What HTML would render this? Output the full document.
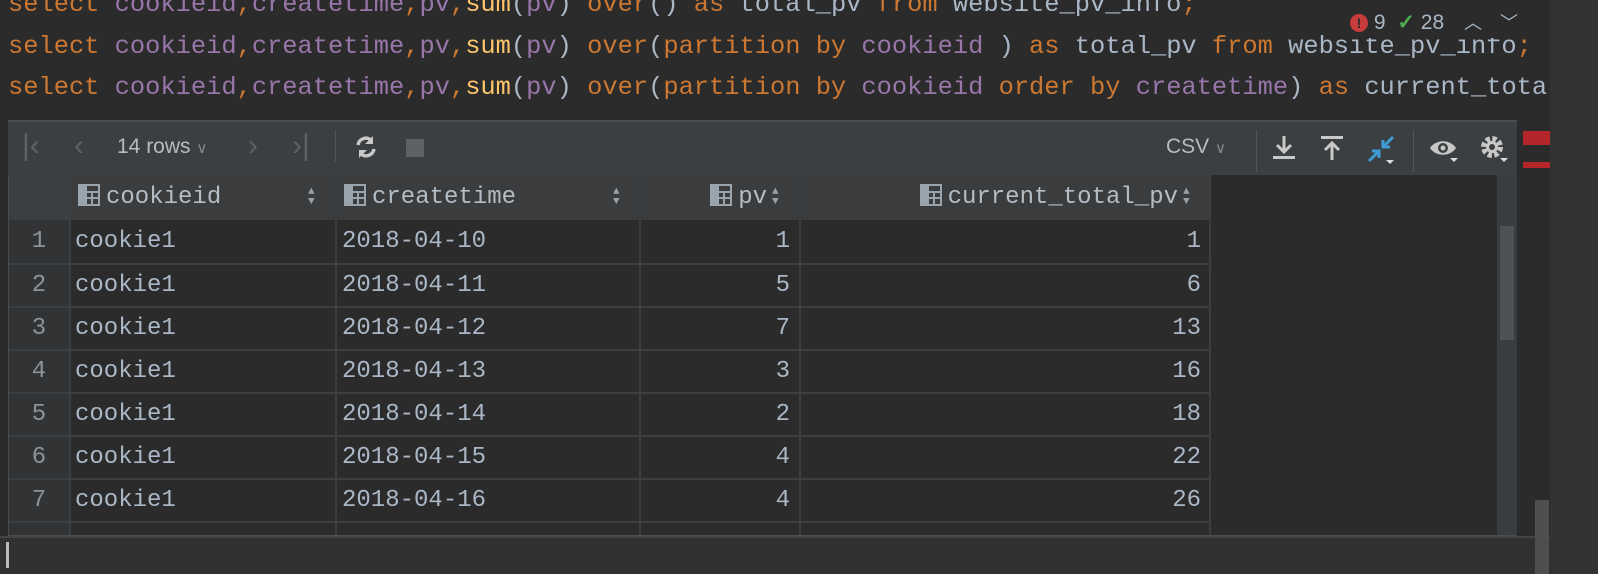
<!DOCTYPE html>
<html><head><meta charset="utf-8"><style>
*{margin:0;padding:0;box-sizing:border-box}
body{width:1598px;height:574px;background:#2b2b2b;position:relative;overflow:hidden;font-family:"Liberation Mono",monospace;}
.code{position:absolute;left:8px;font-size:25.4px;color:#a9b7c6;white-space:pre;line-height:30px}
.k{color:#cc7832}.p{color:#9876aa}.f{color:#ffc66d}
.a{position:absolute}
.cell{position:absolute;font-size:24px;color:#a9b7c6;line-height:43px;white-space:pre}
.num{position:absolute;left:9px;width:60px;text-align:center;font-size:24px;color:#8e9398;line-height:43px}
.hdr{position:absolute;top:175px;height:45px;background:#3a3c3e;font-size:24px;color:#b4bcc4;line-height:45px}
.ic{display:inline-block;width:22px;height:22px;vertical-align:-3px;margin-right:6px}
.nav{position:absolute;top:128px;font-family:'Liberation Sans',sans-serif;font-size:30px;color:#5d6164;line-height:36px}
</style></head><body>
<div class="code" style="top:-10px"><span class="k">select</span> <span class="p">cookieid</span><span class="k">,</span><span class="p">createtime</span><span class="k">,</span><span class="p">pv</span><span class="k">,</span><span class="f">sum</span>(<span class="p">pv</span>) <span class="k">over</span>() <span class="k">as</span> total_pv <span class="k">from</span> website_pv_info<span class="k">;</span></div>
<div class="code" style="top:32px"><span class="k">select</span> <span class="p">cookieid</span><span class="k">,</span><span class="p">createtime</span><span class="k">,</span><span class="p">pv</span><span class="k">,</span><span class="f">sum</span>(<span class="p">pv</span>) <span class="k">over</span>(<span class="k">partition by</span> <span class="p">cookieid</span> ) <span class="k">as</span> total_pv <span class="k">from</span> website_pv_info<span class="k">;</span></div>
<div class="code" style="top:73px"><span class="k">select</span> <span class="p">cookieid</span><span class="k">,</span><span class="p">createtime</span><span class="k">,</span><span class="p">pv</span><span class="k">,</span><span class="f">sum</span>(<span class="p">pv</span>) <span class="k">over</span>(<span class="k">partition by</span> <span class="p">cookieid</span> <span class="k">order by</span> <span class="p">createtime</span>) <span class="k">as</span> current_total_</div>

<!-- inspection widget -->
<div class="a" style="left:1340px;top:8px;height:30px;width:210px;background:#2b2b2b;font-family:'Liberation Sans',sans-serif;font-size:21px;color:#a9b7c6;line-height:30px">
<span style="display:inline-block;width:18px;height:18px;border-radius:50%;background:#c73b3b;color:#2b2b2b;font-size:14px;font-weight:bold;text-align:center;line-height:18px;vertical-align:1px;margin-left:10px">!</span> 9
<span style="color:#4caf50;font-weight:bold;margin-left:6px">✓</span> 28
<span style="margin-left:14px;font-size:18px">︿</span><span style="margin-left:18px;font-size:18px">﹀</span></div>

<!-- right gutter -->
<div class="a" style="left:1550px;top:0;width:48px;height:574px;background:#313335"></div>
<div class="a" style="left:1523px;top:131px;width:27px;height:14px;background:#b5262b"></div>
<div class="a" style="left:1523px;top:162px;width:27px;height:6px;background:#b5262b"></div>

<!-- panel -->
<div class="a" style="left:8px;top:120px;width:1509px;height:416px;background:#2b2b2b;border:1px solid #4a4c4e"></div>
<div class="a" style="left:8px;top:120px;width:1509px;height:55px;background:#3c3f41;border-top:2px solid #4a4c4e"></div>
<div class="nav" style="left:22px">|‹</div>
<div class="nav" style="left:74px">‹</div>
<div class="a" style="left:117px;top:131px;font-family:'Liberation Sans',sans-serif;font-size:21px;color:#bbbbbb;line-height:32px">14 rows <span style="color:#888;font-size:15px">∨</span></div>
<div class="nav" style="left:248px">›</div>
<div class="nav" style="left:292px">›|</div>
<div class="a" style="left:335px;top:130px;width:1px;height:32px;background:#555"></div>
<svg class="a" style="left:353px;top:134px" width="26" height="26" viewBox="0 0 26 26"><path d="M5 11a8 8 0 0 1 14-4M21 15a8 8 0 0 1-14 4" stroke="#c8c8c8" stroke-width="3.5" fill="none"/><path d="M20 2v8h-8z M6 24v-8h8z" fill="#c8c8c8"/></svg>
<div class="a" style="left:406px;top:139px;width:18px;height:18px;background:#5f6264"></div>
<div class="a" style="left:1166px;top:131px;font-family:'Liberation Sans',sans-serif;font-size:21px;color:#bbbbbb;line-height:32px">CSV <span style="color:#888;font-size:15px">∨</span></div>
<div class="a" style="left:1256px;top:130px;width:1px;height:42px;background:#555"></div>
<svg class="a" style="left:1270px;top:134px" width="28" height="28"><path d="M14 2v16M7 11l7 7 7-7" stroke="#c8c8c8" stroke-width="3" fill="none"/><rect x="3" y="22" width="22" height="3" fill="#c8c8c8"/></svg>
<svg class="a" style="left:1318px;top:134px" width="28" height="28"><rect x="3" y="2" width="22" height="3" fill="#c8c8c8"/><path d="M14 26V9M7 16l7-7 7 7" stroke="#c8c8c8" stroke-width="3" fill="none"/></svg>
<svg class="a" style="left:1366px;top:134px" width="32" height="32"><path d="M27 3L17 13M17 6v7h7M3 27l10-10M13 24v-7H6" stroke="#3d9bd6" stroke-width="3" fill="none"/><path d="M20 26h8l-4 4z" fill="#ddd"/></svg>
<div class="a" style="left:1413px;top:130px;width:1px;height:42px;background:#555"></div>
<svg class="a" style="left:1428px;top:134px" width="34" height="32"><path d="M2 14c6-9 20-9 26 0c-6 9-20 9-26 0z" fill="#c8c8c8"/><circle cx="15" cy="14" r="5" fill="#3c3f41"/><circle cx="15" cy="14" r="2.5" fill="#c8c8c8"/><path d="M22 24h8l-4 4z" fill="#ddd"/></svg>
<svg class="a" style="left:1478px;top:134px" width="34" height="32"><circle cx="14" cy="13" r="8" fill="none" stroke="#c8c8c8" stroke-width="6" stroke-dasharray="4 2.3"/><circle cx="14" cy="13" r="6" fill="#c8c8c8"/><circle cx="14" cy="13" r="3" fill="#3c3f41"/><path d="M22 24h8l-4 4z" fill="#ddd"/></svg>

<!-- header -->
<div class="hdr" style="left:9px;width:60px;background:#3c3f41"></div>
<div class="hdr" style="left:70px;width:265px;padding-left:8px"><span class="ic"><svg width="22" height="22"><rect x="0" y="0" width="7" height="22" fill="#9aa4ad"/><rect x="8" y="1" width="13" height="20" fill="none" stroke="#9aa4ad" stroke-width="2"/><path d="M8 8h13M8 14h13M14 8v13" stroke="#9aa4ad" stroke-width="2"/></svg></span>cookieid</div>
<div class="hdr" style="left:336px;width:303px;padding-left:8px"><span class="ic"><svg width="22" height="22"><rect x="0" y="0" width="7" height="22" fill="#9aa4ad"/><rect x="8" y="1" width="13" height="20" fill="none" stroke="#9aa4ad" stroke-width="2"/><path d="M8 8h13M8 14h13M14 8v13" stroke="#9aa4ad" stroke-width="2"/></svg></span>createtime</div>
<div class="hdr" style="left:640px;width:159px;text-align:right;padding-right:32px"><span class="ic"><svg width="22" height="22"><rect x="0" y="0" width="7" height="22" fill="#9aa4ad"/><rect x="8" y="1" width="13" height="20" fill="none" stroke="#9aa4ad" stroke-width="2"/><path d="M8 8h13M8 14h13M14 8v13" stroke="#9aa4ad" stroke-width="2"/></svg></span>pv</div>
<div class="hdr" style="left:800px;width:410px;text-align:right;padding-right:32px"><span class="ic"><svg width="22" height="22"><rect x="0" y="0" width="7" height="22" fill="#9aa4ad"/><rect x="8" y="1" width="13" height="20" fill="none" stroke="#9aa4ad" stroke-width="2"/><path d="M8 8h13M8 14h13M14 8v13" stroke="#9aa4ad" stroke-width="2"/></svg></span>current_total_pv</div>
<div class="a" style="left:308px;top:187px;font-size:11px;color:#9aa0a6;line-height:10px">▲<br>▼</div>
<div class="a" style="left:613px;top:187px;font-size:11px;color:#9aa0a6;line-height:10px">▲<br>▼</div>
<div class="a" style="left:772px;top:187px;font-size:11px;color:#9aa0a6;line-height:10px">▲<br>▼</div>
<div class="a" style="left:1183px;top:187px;font-size:11px;color:#9aa0a6;line-height:10px">▲<br>▼</div>

<!-- row number column -->
<div class="a" style="left:9px;top:220px;width:60px;height:315px;background:#313335"></div>
<div class="a" style="left:69px;top:175px;width:2px;height:360px;background:#3c3f41"></div>
<div class="a" style="left:335px;top:175px;width:2px;height:360px;background:#3c3f41"></div>
<div class="a" style="left:639px;top:175px;width:2px;height:360px;background:#3c3f41"></div>
<div class="a" style="left:799px;top:175px;width:2px;height:360px;background:#3c3f41"></div>
<div class="a" style="left:1209px;top:175px;width:2px;height:360px;background:#3c3f41"></div>

<div class="a" style="left:9px;top:263px;width:1201px;height:2px;background:#3c3f41"></div>
<div class="a" style="left:9px;top:306px;width:1201px;height:2px;background:#3c3f41"></div>
<div class="a" style="left:9px;top:349px;width:1201px;height:2px;background:#3c3f41"></div>
<div class="a" style="left:9px;top:392px;width:1201px;height:2px;background:#3c3f41"></div>
<div class="a" style="left:9px;top:435px;width:1201px;height:2px;background:#3c3f41"></div>
<div class="a" style="left:9px;top:478px;width:1201px;height:2px;background:#3c3f41"></div>
<div class="a" style="left:9px;top:521px;width:1201px;height:2px;background:#3c3f41"></div>

<div class="num" style="top:220px">1</div><div class="cell" style="top:220px;left:75px">cookie1</div><div class="cell" style="top:220px;left:342px">2018-04-10</div><div class="cell" style="top:220px;left:640px;width:150px;text-align:right">1</div><div class="cell" style="top:220px;left:800px;width:401px;text-align:right">1</div>
<div class="num" style="top:264px">2</div><div class="cell" style="top:264px;left:75px">cookie1</div><div class="cell" style="top:264px;left:342px">2018-04-11</div><div class="cell" style="top:264px;left:640px;width:150px;text-align:right">5</div><div class="cell" style="top:264px;left:800px;width:401px;text-align:right">6</div>
<div class="num" style="top:307px">3</div><div class="cell" style="top:307px;left:75px">cookie1</div><div class="cell" style="top:307px;left:342px">2018-04-12</div><div class="cell" style="top:307px;left:640px;width:150px;text-align:right">7</div><div class="cell" style="top:307px;left:800px;width:401px;text-align:right">13</div>
<div class="num" style="top:350px">4</div><div class="cell" style="top:350px;left:75px">cookie1</div><div class="cell" style="top:350px;left:342px">2018-04-13</div><div class="cell" style="top:350px;left:640px;width:150px;text-align:right">3</div><div class="cell" style="top:350px;left:800px;width:401px;text-align:right">16</div>
<div class="num" style="top:393px">5</div><div class="cell" style="top:393px;left:75px">cookie1</div><div class="cell" style="top:393px;left:342px">2018-04-14</div><div class="cell" style="top:393px;left:640px;width:150px;text-align:right">2</div><div class="cell" style="top:393px;left:800px;width:401px;text-align:right">18</div>
<div class="num" style="top:436px">6</div><div class="cell" style="top:436px;left:75px">cookie1</div><div class="cell" style="top:436px;left:342px">2018-04-15</div><div class="cell" style="top:436px;left:640px;width:150px;text-align:right">4</div><div class="cell" style="top:436px;left:800px;width:401px;text-align:right">22</div>
<div class="num" style="top:479px">7</div><div class="cell" style="top:479px;left:75px">cookie1</div><div class="cell" style="top:479px;left:342px">2018-04-16</div><div class="cell" style="top:479px;left:640px;width:150px;text-align:right">4</div><div class="cell" style="top:479px;left:800px;width:401px;text-align:right">26</div>

<!-- scrollbar -->
<div class="a" style="left:1497px;top:175px;width:20px;height:360px;background:#3a3d3f"></div>
<div class="a" style="left:1500px;top:226px;width:14px;height:114px;background:#4e5254"></div>

<!-- bottom -->
<div class="a" style="left:0;top:536px;width:1550px;height:38px;background:#313131;border-top:2px solid #444"></div>
<div class="a" style="left:6px;top:542px;width:3px;height:26px;background:#bbb"></div>
<div class="a" style="left:1535px;top:500px;width:14px;height:74px;background:#4d4f51"></div>
</body></html>
